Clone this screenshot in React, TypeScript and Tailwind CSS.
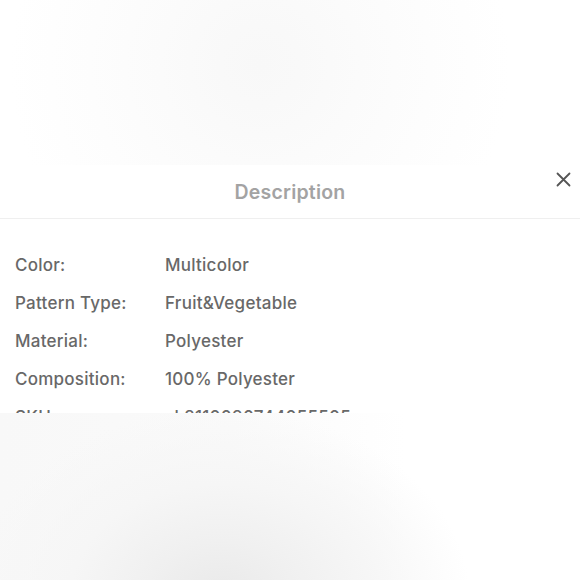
const rows = [
  { label: 'Color:', value: 'Multicolor' },
  { label: 'Pattern Type:', value: 'Fruit&Vegetable' },
  { label: 'Material:', value: 'Polyester' },
  { label: 'Composition:', value: '100% Polyester' },
  { label: 'SKU:', value: 'sk2110090744055505' },
];

export default function App() {
  return (
    <div className="relative w-[580px] h-[580px] overflow-hidden bg-white font-['Inter',sans-serif]">
      {/* blurred backdrop above the sheet */}
      <div className="h-[165px] bg-[radial-gradient(circle_at_260px_65px,#f8f8f8_0px,#f9f9f9_40px,#fbfbfb_100px,#fdfdfd_170px,#ffffff_250px)]" />

      {/* sheet */}
      <div className="bg-white">
        <div className="relative h-[53px] flex items-center justify-center pt-[2px]">
          <span className="text-[19.5px] font-semibold text-[#a3a3a3] tracking-[0.2px]">Description</span>
          <button className="absolute right-[9px] top-[6px] w-[16px] h-[16px] flex items-center justify-center text-[#555]">
            <svg width="15" height="15" viewBox="0 0 15 15" fill="none" stroke="currentColor" strokeWidth="1.8" strokeLinecap="round">
              <path d="M1.5 1.5L13.5 13.5M13.5 1.5L1.5 13.5" />
            </svg>
          </button>
        </div>
        <div className="h-px bg-[#efefef]" />

        <div className="pt-[28px]">
          {rows.map((r) => (
            <div key={r.label} className="h-[38px] flex items-center text-[17px] font-medium text-[#686868] tracking-[0.25px]">
              <span className="w-[165px] pl-[15px] shrink-0">{r.label}</span>
              <span>{r.value}</span>
            </div>
          ))}
        </div>
      </div>

      {/* blurred overlay covering the lower part */}
      <div className="absolute left-0 right-0 top-[413px] bottom-0 bg-[radial-gradient(ellipse_250px_190px_at_220px_185px,#e9e9e9_0%,#f0f0f0_30%,#f6f6f6_60%,rgba(250,250,250,0)_100%),linear-gradient(90deg,#f8f8f8_0%,#fafafa_40%,#ffffff_70%)]" />
    </div>
  );
}
